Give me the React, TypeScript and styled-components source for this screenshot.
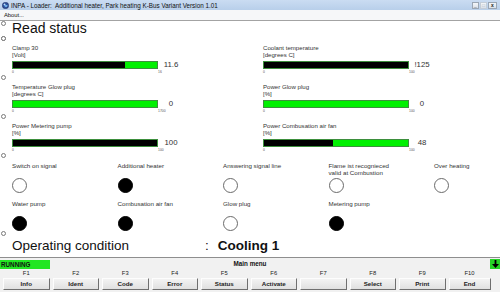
import React from 'react';
import styled, { createGlobalStyle, css } from 'styled-components';

type BarData = {
  label: string;
  unit: string;
  max: string;
  value: string;
  fill: number;
};

type LampData = { label: string; on?: boolean };

const bars: BarData[] = [
  { label: 'Clamp 30', unit: '[Volt]', max: '16', value: '11.6', fill: 0.775 },
  { label: 'Coolant temperature', unit: '[degrees C]', max: '100', value: '!125', fill: 1 },
  { label: 'Temperature Glow plug', unit: '[degrees C]', max: '1700', value: '0', fill: 0 },
  { label: 'Power Glow plug', unit: '[%]', max: '100', value: '0', fill: 0 },
  { label: 'Power Metering pump', unit: '[%]', max: '100', value: '100', fill: 1 },
  { label: 'Power Combusation air fan', unit: '[%]', max: '100', value: '48', fill: 0.48 },
];

const lamps: LampData[] = [
  { label: 'Switch on signal' },
  { label: 'Additional heater', on: true },
  { label: 'Answering signal line' },
  { label: 'Flame ist recognieced valid at Combustion' },
  { label: 'Over heating' },
  { label: 'Water pump', on: true },
  { label: 'Combusation air fan', on: true },
  { label: 'Glow plug' },
  { label: 'Metering pump', on: true },
];

const keys = [
  { key: 'F1', title: 'Info' },
  { key: 'F2', title: 'Ident' },
  { key: 'F3', title: 'Code' },
  { key: 'F4', title: 'Error' },
  { key: 'F5', title: 'Status' },
  { key: 'F6', title: 'Activate' },
  { key: 'F7', title: '' },
  { key: 'F8', title: 'Select' },
  { key: 'F9', title: 'Print' },
  { key: 'F10', title: 'End' },
];

const GlobalStyle = createGlobalStyle`
  html, body {
    margin: 0;
    padding: 0;
    width: 500px;
    height: 292px;
    overflow: hidden;
    background: #fff;
    font-family: "Liberation Sans", Arial, sans-serif;
  }
`;

// small hollow ring the original draws in the left gutter
const marker = (top: number) => css`
  position: relative;
  &::before {
    content: '';
    position: absolute;
    left: -11px;
    top: ${top}px;
    width: 5px;
    height: 5px;
    box-sizing: border-box;
    border: 1px solid #7a7a7a;
    border-radius: 50%;
    background: #fff;
  }
`;

const Window = styled.div`
  width: 500px;
  height: 292px;
  display: flex;
  flex-direction: column;
  overflow: hidden;
`;

const TitleBar = styled.div`
  height: 10px;
  display: flex;
  align-items: center;
  padding: 0 2px;
  background: linear-gradient(#cadcf2, #b8cfea);
  font-size: 6.3px;
  color: #111;
`;

const TitleText = styled.span`
  margin-left: 2px;
  flex: 1;
  white-space: pre;
`;

const WinButtons = styled.div`
  display: flex;
  gap: 1px;
  margin-right: 1px;
`;

const WinButton = styled.div<{ $wide?: boolean; $faded?: boolean }>`
  width: ${(p) => (p.$wide ? 9 : 7)}px;
  height: 7px;
  box-sizing: border-box;
  border: 1px solid ${(p) => (p.$faded ? '#c4cdd8' : '#9aa6b4')};
  background: linear-gradient(#f4f6f9, #d9e0e8);
  display: flex;
  align-items: center;
  justify-content: center;
  font-size: 5px;
  font-weight: bold;
  line-height: 1;
  color: ${(p) => (p.$faded ? '#b0b8c2' : '#222')};
`;

const MenuBar = styled.div`
  height: 10px;
  border-bottom: 1px solid #a3a3a3;
  background: #f6f7f9;
  display: flex;
  align-items: center;
  padding-left: 4px;
  font-size: 5.8px;
  color: #111;
`;

const Content = styled.div`
  flex: 1;
  display: flex;
  flex-direction: column;
  padding-left: 12px;
  background: #fff;
`;

const Heading = styled.h1`
  margin: 0;
  height: 14px;
  font-size: 14px;
  line-height: 14px;
  font-weight: normal;
  color: #111;
  ${marker(0)}
  &::after {
    content: '';
    position: absolute;
    left: -11px;
    top: 15px;
    width: 5px;
    height: 5px;
    box-sizing: border-box;
    border: 1px solid #7a7a7a;
    border-radius: 50%;
  }
`;

const BarGrid = styled.div`
  margin-top: 9px;
  display: grid;
  grid-template-columns: 251px 1fr;
  row-gap: 8px;
`;

const BarBlock = styled.div<{ $marked?: boolean }>`
  ${(p) => p.$marked && marker(-8)}
`;

const Label = styled.div`
  font-size: 6.1px;
  line-height: 7px;
  color: #333;
`;

const BarRow = styled.div`
  margin-top: 3px;
  display: flex;
  align-items: center;
`;

const Bar = styled.div`
  width: 146px;
  height: 8px;
  box-sizing: border-box;
  border: 1px solid #3d8f3d;
  background: #00f000;
  display: flex;
`;

const BarFill = styled.div`
  height: 100%;
  background: #000;
`;

const Value = styled.div`
  width: 26px;
  text-align: center;
  font-size: 7.8px;
  line-height: 8px;
  color: #333;
`;

const Scale = styled.div`
  width: 146px;
  height: 5px;
  margin-top: 1px;
  display: flex;
  font-size: 3.4px;
  line-height: 5px;
  color: #555;
`;

const ScaleGap = styled.span`
  flex: 1;
`;

const ScaleMax = styled.span`
  width: 0;
  margin-left: -1px;
  white-space: nowrap;
`;

const LampGrid = styled.div`
  margin-top: 8.5px;
  display: grid;
  grid-template-columns: repeat(4, 105.5px) 1fr;
  row-gap: 7px;
  ${marker(-8.5)}
`;

const LampCell = styled.div`
  display: flex;
  flex-direction: column;
`;

const LampLabel = styled(Label)`
  width: 64px;
  height: 14px;
  margin-bottom: 2px;
  font-size: 6.2px;
`;

const Lamp = styled.div<{ $on?: boolean }>`
  width: 15px;
  height: 15px;
  box-sizing: border-box;
  border-radius: 50%;
  border: 1px solid ${(p) => (p.$on ? '#000' : '#6a6a6a')};
  background: ${(p) => (p.$on ? '#000' : '#fff')};
`;

const StateRow = styled.div`
  margin-top: 8.5px;
  display: flex;
  align-items: baseline;
  font-size: 13.5px;
  line-height: 14px;
  color: #111;
  ${marker(-8)}
`;

const StateLabel = styled.span`
  width: 193px;
`;

const StateValue = styled.span`
  margin-left: 9px;
  font-weight: bold;
`;

const Bottom = styled.div`
  height: 35px;
  box-sizing: border-box;
  border-top: 1px solid #8e8e8e;
  background: #f1f1f1;
  display: flex;
  flex-direction: column;
`;

const StatusRow = styled.div`
  height: 10px;
  display: grid;
  grid-template-columns: 1fr auto 1fr;
  align-items: center;
  font-size: 6.3px;
  font-weight: bold;
  color: #111;
`;

const Running = styled.div`
  justify-self: start;
  width: 49px;
  height: 9px;
  margin-top: 1px;
  padding-left: 1px;
  background: #22e622;
  line-height: 9px;
`;

const ArrowBox = styled.div`
  justify-self: end;
  width: 10px;
  height: 10px;
  margin-top: 1px;
  background: #25d425;
  display: flex;
  align-items: center;
  justify-content: center;
`;

const KeyGrid = styled.div`
  padding-left: 3px;
  display: grid;
  grid-template-columns: repeat(9, 46.5px) 42px;
  column-gap: 3px;
`;

const KeyCell = styled.div`
  display: flex;
  flex-direction: column;
  align-items: stretch;
`;

const KeyName = styled.div`
  height: 10px;
  text-align: center;
  font-size: 5.8px;
  line-height: 10px;
  color: #222;
`;

const KeyButton = styled.div`
  height: 12px;
  box-sizing: border-box;
  border: 1px solid;
  border-color: #fdfdfd #6f6f6f #6f6f6f #fdfdfd;
  background: linear-gradient(#f3f3f3, #e0e0e0);
  text-align: center;
  font-size: 6.2px;
  font-weight: bold;
  line-height: 10px;
  color: #222;
`;

const Globe = () => (
  <svg width="7" height="7" viewBox="0 0 10 10">
    <circle cx="5" cy="5" r="4.6" fill="#2c4f9a" stroke="#1a2c55" strokeWidth="0.6" />
    <path d="M2 3.5 Q4 2 5 3.5 T8 4 L7.5 6.5 Q5.5 8 4 6.5 Z" fill="#6fb0e8" />
    <circle cx="3.6" cy="3.2" r="1.2" fill="#d9ecff" opacity="0.8" />
  </svg>
);

const DownArrow = () => (
  <svg width="7" height="8" viewBox="0 0 7 8">
    <rect x="2.6" y="0" width="1.8" height="4.5" fill="#000" />
    <polygon points="0,4 7,4 3.5,8" fill="#000" />
  </svg>
);

const App = () => {
  return (
    <>
      <GlobalStyle />
      <Window>
        <TitleBar>
          <Globe />
          <TitleText>INPA - Loader:  Additional heater, Park heating K-Bus Variant Version 1.01</TitleText>
          <WinButtons>
            <WinButton>_</WinButton>
            <WinButton $faded>□</WinButton>
            <WinButton $wide>x</WinButton>
          </WinButtons>
        </TitleBar>
        <MenuBar>About...</MenuBar>
        <Content>
          <Heading>Read status</Heading>
          <BarGrid>
            {bars.map((b, i) => (
              <BarBlock key={b.label} $marked={i % 2 === 0}>
                <Label>{b.label}</Label>
                <Label>{b.unit}</Label>
                <BarRow>
                  <Bar>
                    <BarFill style={{ width: `${b.fill * 100}%` }} />
                  </Bar>
                  <Value>{b.value}</Value>
                </BarRow>
                <Scale>
                  <span>0</span>
                  <ScaleGap />
                  <ScaleMax>{b.max}</ScaleMax>
                </Scale>
              </BarBlock>
            ))}
          </BarGrid>
          <LampGrid>
            {lamps.map((l) => (
              <LampCell key={l.label}>
                <LampLabel>{l.label}</LampLabel>
                <Lamp $on={l.on} />
              </LampCell>
            ))}
          </LampGrid>
          <StateRow>
            <StateLabel>Operating condition</StateLabel>
            <span>:</span>
            <StateValue>Cooling 1</StateValue>
          </StateRow>
        </Content>
        <Bottom>
          <StatusRow>
            <Running>RUNNING</Running>
            <span>Main menu</span>
            <ArrowBox>
              <DownArrow />
            </ArrowBox>
          </StatusRow>
          <KeyGrid>
            {keys.map((k) => (
              <KeyCell key={k.key}>
                <KeyName>{k.key}</KeyName>
                <KeyButton>{k.title}</KeyButton>
              </KeyCell>
            ))}
          </KeyGrid>
        </Bottom>
      </Window>
    </>
  );
};

export default App;
